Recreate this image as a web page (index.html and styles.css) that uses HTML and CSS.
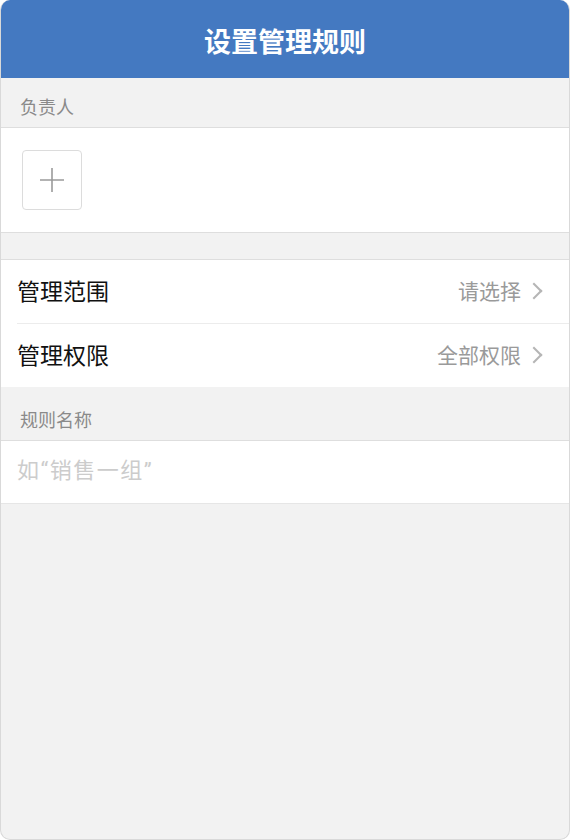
FILE: index.html
```html
<!DOCTYPE html>
<html lang="zh-CN">
<head>
  <meta charset="UTF-8">
  <meta name="viewport" content="width=device-width, initial-scale=1.0">
  <title>设置管理规则</title>
  <link rel="stylesheet" href="styles.css">
</head>
<body>
  <div class="phone">
    <header class="top-bar">设置管理规则</header>

    <div class="section-label">负责人</div>
    <div class="owner-box">
      <div class="add-btn">
        <svg width="26" height="26" viewBox="0 0 26 26">
          <path d="M13 1V25M1 13H25" stroke="#9a9a9a" stroke-width="1.6" fill="none"/>
        </svg>
      </div>
    </div>

    <div class="spacer"></div>
    <div class="list">
      <div class="row">
        <span class="row-title">管理范围</span>
        <span class="row-value">请选择<i class="chevron"></i></span>
      </div>
      <div class="row">
        <span class="row-title">管理权限</span>
        <span class="row-value">全部权限<i class="chevron"></i></span>
      </div>
    </div>

    <div class="section-label tall">规则名称</div>
    <div class="name-box">
      <input type="text" class="name-input" placeholder="如“销售一组”">
    </div>
  </div>
</body>
</html>
```

FILE: styles.css
```css
body {
  margin: 0;
  font-family: "Noto Sans CJK SC", "Noto Sans", sans-serif;
}
.phone {
  width: 570px;
  height: 840px;
  box-sizing: border-box;
  border: 1px solid #d9d9d9;
  border-top: none;
  border-radius: 10px;
  overflow: hidden;
  background-color: #f2f2f2;
}
.top-bar {
  height: 78px;
  margin: 0 -1px;
  background-color: #4479c1;
  color: white;
  font-size: 27px;
  font-weight: bold;
  display: flex;
  align-items: center;
  justify-content: center;
  padding-top: 3px;
  box-sizing: border-box;
}
.section-label {
  height: 50px;
  box-sizing: border-box;
  padding: 16px 0 0 19px;
  font-size: 18px;
  line-height: 24px;
  color: #8a8a8a;
  border-bottom: 1px solid #dedede;
}
.section-label.tall {
  height: 54px;
  padding-top: 20px;
}
.owner-box {
  background: white;
  padding: 22px 21px;
  border-bottom: 1px solid #dedede;
}
.add-btn {
  width: 60px;
  height: 60px;
  box-sizing: border-box;
  border: 1px solid #dcdcdc;
  border-radius: 4px;
  display: flex;
  align-items: center;
  justify-content: center;
}
.spacer {
  height: 26px;
  border-bottom: 1px solid #dedede;
}
.list {
  background: white;
  padding-left: 16px;
}
.row {
  height: 63px;
  display: flex;
  align-items: center;
  justify-content: space-between;
  padding: 0 29px 3px 0;
  box-sizing: border-box;
}
.row + .row {
  height: 64px;
  border-top: 1px solid #ececec;
}
.row-title {
  font-size: 23px;
  color: #111;
}
.row-value {
  font-size: 21px;
  color: #9a9a9a;
  display: flex;
  align-items: center;
}
.chevron {
  width: 10px;
  height: 10px;
  border-top: 2px solid #b5b5b5;
  border-right: 2px solid #b5b5b5;
  transform: rotate(45deg);
  margin: 2px 0 0 7px;
}
.name-box {
  background: white;
  height: 62px;
  border-bottom: 1px solid #e6e6e6;
}
.name-input {
  width: 100%;
  height: 100%;
  box-sizing: border-box;
  border: none;
  outline: none;
  padding: 0 16px 4px;
  font-family: Roboto, "Noto Sans CJK SC", sans-serif;
  font-size: 22px;
  letter-spacing: 1.5px;
  background: transparent;
}
.name-input::placeholder {
  color: #cccccc;
}
```
